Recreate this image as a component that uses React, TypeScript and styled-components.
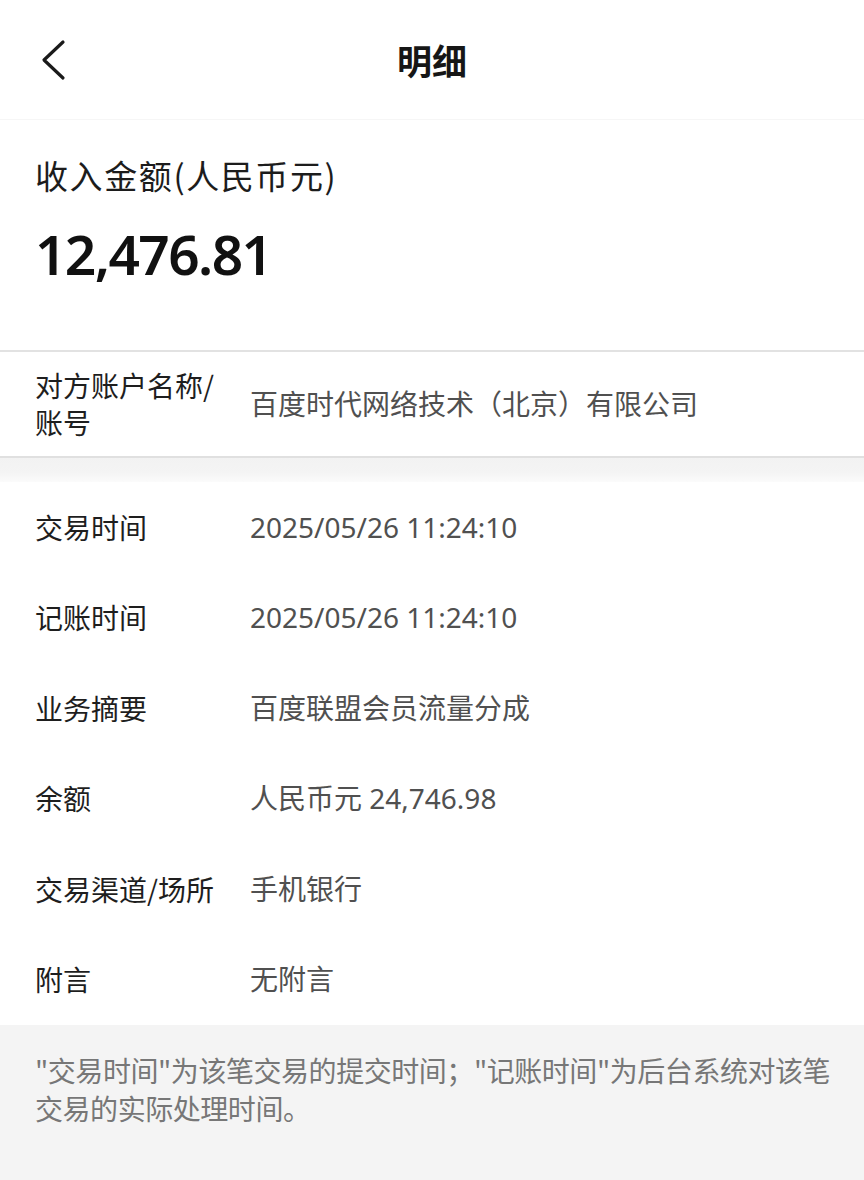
import React from "react";
import styled, { createGlobalStyle } from "styled-components";

const Global = createGlobalStyle`
  html, body {
    margin: 0;
    padding: 0;
    background: #ffffff;
  }
  body {
    font-family: "Noto Sans", "Noto Sans CJK SC", sans-serif;
    color: #1c1c1c;
    -webkit-font-smoothing: antialiased;
  }
  * { box-sizing: border-box; }
`;

const Page = styled.div`
  width: 864px;
  min-height: 1180px;
  display: flex;
  flex-direction: column;
  background: #f4f4f4;
`;

const Header = styled.header`
  height: 120px;
  display: grid;
  grid-template-columns: 120px 1fr 120px;
  align-items: center;
  background: #ffffff;
  border-bottom: 1px solid #f6f6f6;
`;

const BackButton = styled.button`
  border: none;
  background: none;
  padding: 0 0 0 40px;
  height: 60px;
  display: flex;
  align-items: center;
  justify-self: start;
  cursor: pointer;
  color: #1a1a1a;
`;

const Title = styled.h1`
  margin: 0;
  text-align: center;
  font-size: 35px;
  font-weight: 700;
  color: #161616;
  font-family: "Noto Sans CJK SC", sans-serif;
`;

const AmountSection = styled.section`
  background: #ffffff;
  padding: 33px 35px 61px;
  display: flex;
  flex-direction: column;
  gap: 22px;
  border-bottom: 2px solid #e2e2e2;
`;

const AmountLabel = styled.div`
  font-size: 33px;
  line-height: 44px;
  letter-spacing: 1.6px;
  color: #1c1c1c;
  font-family: "Noto Sans CJK SC", sans-serif;
`;

const AmountValue = styled.div`
  font-size: 55px;
  line-height: 70px;
  font-weight: 600;
  letter-spacing: -1.6px;
  color: #111;
  font-family: "Noto Sans", sans-serif;
`;

const AccountCard = styled.section`
  background: #ffffff;
  border-bottom: 2px solid #e0e0e0;
`;

const Gap = styled.div`
  height: 24px;
  background: linear-gradient(#f2f2f2 0%, #f4f4f4 60%, #fbfbfb 100%);
`;

const DetailList = styled.section`
  background: #ffffff;
  display: flex;
  flex-direction: column;
`;

const Row = styled.div<{ $tall?: boolean }>`
  display: grid;
  grid-template-columns: 215px 1fr;
  align-items: center;
  padding: ${(p) => (p.$tall ? "15px 35px" : "0 35px")};
  height: ${(p) => (p.$tall ? "104px" : "90.5px")};
`;

const Label = styled.div`
  font-size: 28px;
  line-height: 37px;
  color: #1e1e1e;
  font-family: "Noto Sans CJK SC", sans-serif;
`;

const Value = styled.div`
  font-size: 28px;
  line-height: 37px;
  color: #505050;
  font-family: "Noto Sans", "Noto Sans CJK SC", sans-serif;
`;

const Footer = styled.footer`
  flex: 1;
  background: #f4f4f4;
  padding: 26px 8px 40px 35px;
`;

const Note = styled.p`
  margin: 0;
  font-size: 28px;
  line-height: 38px;
  color: #777777;
  font-family: "Noto Sans CJK SC", sans-serif;
  letter-spacing: -0.45px;
`;

const ChevronLeft = () => (
  <svg width="26" height="42" viewBox="0 0 26 42" fill="none">
    <path
      d="M23 3 L4 21 L23 39"
      stroke="#1a1a1a"
      strokeWidth="3.2"
      strokeLinecap="round"
      strokeLinejoin="round"
    />
  </svg>
);

const details: { label: string; value: string }[] = [
  { label: "交易时间", value: "2025/05/26 11:24:10" },
  { label: "记账时间", value: "2025/05/26 11:24:10" },
  { label: "业务摘要", value: "百度联盟会员流量分成" },
  { label: "余额", value: "人民币元 24,746.98" },
  { label: "交易渠道/场所", value: "手机银行" },
  { label: "附言", value: "无附言" },
];

export default function App() {
  return (
    <>
      <Global />
      <Page>
        <Header>
          <BackButton aria-label="返回">
            <ChevronLeft />
          </BackButton>
          <Title>明细</Title>
          <span />
        </Header>
        <AmountSection>
          <AmountLabel>收入金额(人民币元)</AmountLabel>
          <AmountValue>12,476.81</AmountValue>
        </AmountSection>
        <AccountCard>
          <Row $tall>
            <Label>
              对方账户名称/
              <br />
              账号
            </Label>
            <Value>百度时代网络技术（北京）有限公司</Value>
          </Row>
        </AccountCard>
        <Gap />
        <DetailList>
          {details.map((d) => (
            <Row key={d.label}>
              <Label>{d.label}</Label>
              <Value>{d.value}</Value>
            </Row>
          ))}
        </DetailList>
        <Footer>
          <Note>
            "交易时间"为该笔交易的提交时间；"记账时间"为后台系统对该笔
            <br />
            交易的实际处理时间。
          </Note>
        </Footer>
      </Page>
    </>
  );
}
